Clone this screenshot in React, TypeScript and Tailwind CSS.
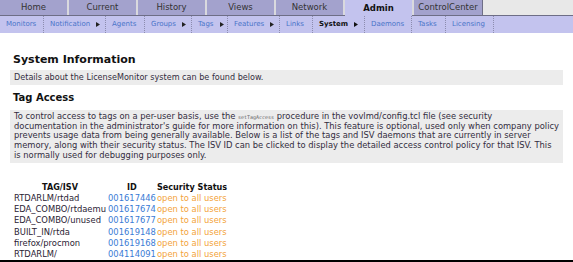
import React from "react";

const tabs = [
  { label: "Home", w: 67 },
  { label: "Current", w: 67 },
  { label: "History", w: 67 },
  { label: "Views", w: 67 },
  { label: "Network", w: 67 },
  { label: "Admin", w: 67, active: true },
  { label: "ControlCenter", w: 68 },
];

const sub = [
  { label: "Monitors", w: 44 },
  { label: "Notification", w: 62, arrow: true },
  { label: "Agents", w: 39 },
  { label: "Groups", w: 47, arrow: true },
  { label: "Tags", w: 36, arrow: true },
  { label: "Features", w: 52, arrow: true },
  { label: "Links", w: 33 },
  { label: "System", w: 52, arrow: true, active: true },
  { label: "Daemons", w: 47 },
  { label: "Tasks", w: 34 },
  { label: "Licensing", w: 48 },
];

const rows = [
  ["RTDARLM/rtdad", "001617446"],
  ["EDA_COMBO/rtdaemu", "001617674"],
  ["EDA_COMBO/unused", "001617677"],
  ["BUILT_IN/rtda", "001619148"],
  ["firefox/procmon", "001619168"],
  ["RTDARLM/", "004114091"],
];

function Arrow({ dark }: { dark?: boolean }) {
  return (
    <svg width="4" height="5" viewBox="0 0 4 5" className="ml-[6px]">
      <path d="M0 0 L4 2.5 L0 5 Z" fill={dark ? "#111" : "#222"} />
    </svg>
  );
}

export default function App() {
  return (
    <div className="w-[573px] h-[262px] bg-white overflow-hidden border-b-2 border-black font-['DejaVu_Sans',sans-serif]">
      {/* Top tabs */}
      <div className="flex h-[16px] bg-[#e6e6e6]">
        {tabs.map((t, i) => (
          <React.Fragment key={t.label}>
            {i > 0 && (
              <div className="w-[2px] h-full bg-[#d9d9de] border-b border-[#6e6e86]" />
            )}
            <div
              style={{ width: t.w }}
              className={
                t.active
                  ? "h-[16px] bg-[#c3c3ee] flex items-center justify-center text-[8.5px] font-bold text-[#111]"
                  : "h-full bg-[#a3a2cd] border-b border-[#6e6e86] flex items-center justify-center text-[8.5px] text-[#333]"
              }
            >
              {t.label}
            </div>
          </React.Fragment>
        ))}
        <div className="flex-1 h-full border-l border-[#6e6e86] border-b bg-[#e8e8e8]" />
      </div>
      {/* Sub nav */}
      <div className="flex h-[17px] bg-[#c3c3ee]">
        {sub.map((s) => (
          <div
            key={s.label}
            style={{ width: s.w }}
            className="h-full flex items-center pl-[6px] border-r border-dotted border-[#8c8cae]"
          >
            <span
              className={
                s.active
                  ? "text-[7px] font-bold text-[#111]"
                  : "text-[7px] text-[#4a74c9]"
              }
            >
              {s.label}
            </span>
            {s.arrow && <Arrow dark={s.active} />}
          </div>
        ))}
      </div>
      {/* Content */}
      <div className="px-[10px] text-[#332d40]">
        <div className="pt-[20px] pl-[3px] text-[11px] font-bold text-[#111] leading-[14px]">
          System Information
        </div>
        <div className="mt-[3px] bg-[#ececec] px-[4px] h-[15px] flex items-center text-[8.1px]">
          Details about the LicenseMonitor system can be found below.
        </div>
        <div className="mt-[7px] pl-[3px] text-[10px] font-bold text-[#111] leading-[12px]">
          Tag Access
        </div>
        <div className="mt-[6px] bg-[#ececec] px-[4px] pt-[2px] pb-[2px] text-[8.35px] leading-[9.7px] whitespace-nowrap">
          <div>
            To control access to tags on a per-user basis, use the{" "}
            <span className="font-['DejaVu_Sans_Mono',monospace] text-[5px] leading-none text-[#666]">
              setTagAccess
            </span>{" "}
            procedure in the vovlmd/config.tcl file (see security
          </div>
          <div>
            documentation in the administrator's guide for more information on
            this). This feature is optional, used only when company policy
          </div>
          <div>
            prevents usage data from being generally available. Below is a list
            of the tags and ISV daemons that are currently in server
          </div>
          <div>
            memory, along with their security status. The ISV ID can be clicked
            to display the detailed access control policy for that ISV. This
          </div>
          <div>is normally used for debugging purposes only.</div>
        </div>
        <table className="mt-[19px] ml-[4px] border-collapse text-[8.4px] leading-[11.3px]">
          <thead>
            <tr className="font-bold text-[#111] text-[8.1px]">
              <th className="text-center p-0 pr-[2px]">TAG/ISV</th>
              <th className="text-center p-0">ID</th>
              <th className="text-left p-0 pl-[1px]">Security Status</th>
            </tr>
          </thead>
          <tbody>
            {rows.map(([tag, id]) => (
              <tr key={tag}>
                <td className="p-0 pr-[2px] text-[#2a2233]">{tag}</td>
                <td className="p-0 text-[#3a7bd5]">{id}</td>
                <td className="p-0 pl-[1px] text-[#f3a33a]">open to all users</td>
              </tr>
            ))}
          </tbody>
        </table>
      </div>
    </div>
  );
}
